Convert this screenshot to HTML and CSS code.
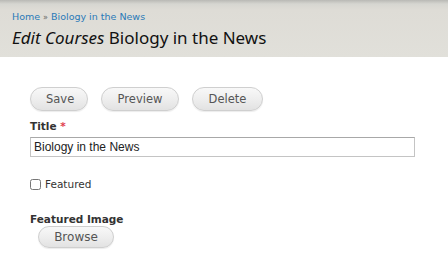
FILE: index.html
```html
<!DOCTYPE html>
<html lang="en">
  <head>
    <meta charset="UTF-8" />
    <title>Edit Courses Biology in the News</title>
    <link rel="stylesheet" href="styles.css">
  </head>

  <body>
    <!-- Page header -->
    <div class="page-header">
      <div class="breadcrumb">
        <a href="#">Home</a> <span class="sep">»</span> <a href="#">Biology in the News</a>
      </div>
      <h1><em>Edit Courses</em> Biology in the News</h1>
    </div>

    <form class="node-form">
      <div class="form-actions">
        <button type="button" class="btn">Save</button>
        <button type="button" class="btn">Preview</button>
        <button type="button" class="btn">Delete</button>
      </div>

      <div class="form-item">
        <label class="field-label" for="title">Title <span class="required">*</span></label>
        <input type="text" id="title" class="text-input" value="Biology in the News" />
      </div>

      <div class="form-item checkbox-item">
        <input type="checkbox" id="featured" />
        <label for="featured">Featured</label>
      </div>

      <div class="form-item file-item">
        <label class="field-label">Featured Image</label>
        <button type="button" class="btn browse">Browse</button>
      </div>
    </form>
  </body>
</html>
```

FILE: styles.css
```css
* {
  box-sizing: border-box;
  margin: 0;
  padding: 0;
}

body {
  font-family: "DejaVu Sans", sans-serif;
  background-color: #fff;
  color: #333;
  width: 448px;
  height: 270px;
  overflow: hidden;
}

/* Header band */
.page-header {
  height: 57px;
  padding: 10px 12px 0 12px;
  background: linear-gradient(to bottom, #b9b9b5 0px, #d6d6d1 4px, #dedcd6 10px, #e1e0da 100%);
}

.breadcrumb {
  font-size: 9.5px;
  line-height: 13px;
  color: #2a7ab8;
}

.breadcrumb a {
  color: #2a7ab8;
  text-decoration: none;
}

.breadcrumb .sep {
  color: #666;
  font-size: 8px;
}

h1 {
  margin-top: 3px;
  font-family: "Noto Sans", sans-serif;
  font-size: 17px;
  font-weight: 400;
  line-height: 22px;
  color: #111;
}

h1 em {
  font-style: italic;
}

/* Form */
.node-form {
  padding: 30px 0 0 30px;
}

.form-actions {
  display: flex;
  gap: 13px;
  margin-bottom: 8px;
}

.btn {
  height: 24px;
  padding: 0 15px;
  border: 1px solid #cfcfcf;
  border-radius: 12px;
  background: linear-gradient(to bottom, #f8f8f8 0%, #ededed 55%, #e2e2e2 100%);
  font-family: "DejaVu Sans", sans-serif;
  font-size: 11.5px;
  color: #555;
  box-shadow: 0 1px 1px rgba(0, 0, 0, 0.08);
  cursor: pointer;
}

.form-actions .btn:nth-child(1) {
  width: 58px;
}

.form-actions .btn:nth-child(2) {
  width: 78px;
}

.form-actions .btn:nth-child(3) {
  width: 71px;
}

.form-item {
  margin-bottom: 20px;
}

.field-label {
  display: block;
  font-size: 10.5px;
  font-weight: 700;
  line-height: 14px;
  color: #333;
  margin-bottom: 4px;
}

.required {
  color: #e04050;
}

.text-input {
  display: block;
  width: 385px;
  height: 20px;
  padding: 0 3px;
  border: 1px solid #c4c4c4;
  border-top-color: #a8a8a8;
  font-family: "Liberation Sans", sans-serif;
  font-size: 12px;
  color: #222;
}

.checkbox-item {
  display: flex;
  align-items: center;
  gap: 4px;
  margin-top: 21px;
  margin-bottom: 22px;
  font-size: 10.5px;
  color: #333;
}

.checkbox-item input {
  width: 11px;
  height: 11px;
  margin: 0;
}

.file-item .field-label {
  margin-bottom: 0;
}

.btn.browse {
  display: block;
  width: 76px;
  height: 22px;
  margin-left: 8px;
  font-size: 12px;
}
```
